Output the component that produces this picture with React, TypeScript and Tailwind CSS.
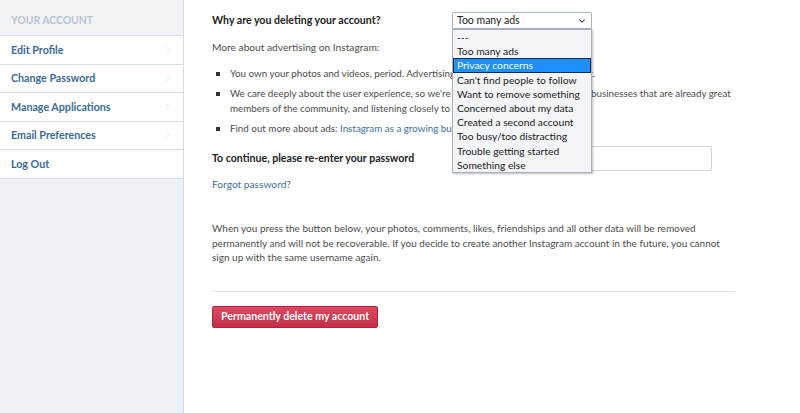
import { ChevronRight, ChevronDown } from "lucide-react";

const navItems = ["Edit Profile", "Change Password", "Manage Applications", "Email Preferences", "Log Out"];

const reasons = [
  "---",
  "Too many ads",
  "Privacy concerns",
  "Can't find people to follow",
  "Want to remove something",
  "Concerned about my data",
  "Created a second account",
  "Too busy/too distracting",
  "Trouble getting started",
  "Something else",
];

function Sidebar() {
  return (
    <aside className="w-[184px] shrink-0 border-r border-[#d3dbe4] bg-[#edf1f5] min-h-[413px]">
      <div className="h-[36px] bg-[#f1f3f6] border-b border-[#d6dde6] flex items-center pl-[11px] pt-[6px]">
        <span className="text-[10.4px] font-bold text-[#b9c5d1]">YOUR ACCOUNT</span>
      </div>
      <ul>
        {navItems.map((item, i) => (
          <li
            key={item}
            className="h-[28.5px] bg-white border-b border-[#d6dde6] flex items-center justify-between pl-[11px] pr-[10px]"
          >
            <span className="text-[10.7px] font-bold text-[#3c6a93]">{item}</span>
            {i < 4 && <ChevronRight size={11} strokeWidth={1.5} className="text-[#d4d9df]" />}
          </li>
        ))}
      </ul>
    </aside>
  );
}

function ReasonSelect() {
  return (
    <div className="relative w-[140px]">
      <div className="h-[17px] border border-[#a9b3bd] rounded-t-[2px] bg-white flex items-center justify-between pl-[4px] pr-[4px] text-[10.5px] text-[#222] whitespace-nowrap">
        <span>Too many ads</span>
        <ChevronDown size={10} strokeWidth={2.5} className="text-[#333]" />
      </div>
      <ul className="absolute left-0 top-[17px] w-[140px] z-10 bg-[#f3f5f8] border border-[#a9afb6] shadow-[1px_1px_2px_rgba(0,0,0,0.25)] text-[10.3px] text-[#222] leading-[14.2px] whitespace-nowrap">
        {reasons.map((r) => (
          <li
            key={r}
            className={
              r === "Privacy concerns"
                ? "bg-[#1e90ff] text-white border border-[#1a2b44] px-[3px] h-[14.2px] leading-[12.2px]"
                : "px-[4px] h-[14.2px]"
            }
          >
            {r}
          </li>
        ))}
      </ul>
    </div>
  );
}

export default function App() {
  return (
    <div className="flex w-[800px] min-h-[413px] bg-white font-['Lato',sans-serif] text-[10.2px] text-[#4d4d4d]">
      <Sidebar />
      <main className="pl-[28px] pt-[12px] w-[560px]">
        <div className="flex items-start">
          <label className="w-[240px] pt-[1px] text-[10.6px] font-bold text-[#222]">Why are you deleting your account?</label>
          <ReasonSelect />
        </div>

        <p className="mt-[11px] leading-[15px]">More about advertising on Instagram:</p>

        <ul className="mt-[11px] space-y-[5px] leading-[15px] text-[9.8px] w-[530px]">
          <li className="flex">
            <span className="w-[4px] h-[4px] bg-[#333] mt-[6px] ml-[4px] mr-[10px] shrink-0" />
            <span>You own your photos and videos, period. Advertising on Instagram won't change that.</span>
          </li>
          <li className="flex">
            <span className="w-[4px] h-[4px] bg-[#333] mt-[6px] ml-[4px] mr-[10px] shrink-0" />
            <span>
              We care deeply about the user experience, so we're starting slowly, with brands and businesses that are already great
              members of the community, and listening closely to your feedback.
            </span>
          </li>
          <li className="flex">
            <span className="w-[4px] h-[4px] bg-[#333] mt-[6px] ml-[4px] mr-[10px] shrink-0" />
            <span>
              Find out more about ads: <a className="text-[#3f729b]">Instagram as a growing business</a>
            </span>
          </li>
        </ul>

        <div className="flex items-center mt-[10px]">
          <label className="w-[240px] text-[10.6px] font-bold text-[#222]">To continue, please re-enter your password</label>
          <input type="password" className="w-[260px] h-[25px] border border-[#d3d3d3] rounded-[2px] bg-white" />
        </div>

        <a className="block mt-[6px] leading-[15px] text-[#3f729b]">Forgot password?</a>

        <p className="mt-[29px] text-[10px] leading-[14.5px] w-[523px]">
          When you press the button below, your photos, comments, likes, friendships and all other data will be removed
          permanently and will not be recoverable. If you decide to create another Instagram account in the future, you cannot
          sign up with the same username again.
        </p>

        <hr className="mt-[26px] w-[523px] border-t border-[#e1e1e1]" />

        <button className="mt-[14px] h-[22px] px-[8px] rounded-[2px] border border-[#b3233b] bg-gradient-to-b from-[#dc4a62] to-[#c22d46] text-white text-[10.6px] font-bold">
          Permanently delete my account
        </button>
      </main>
    </div>
  );
}
